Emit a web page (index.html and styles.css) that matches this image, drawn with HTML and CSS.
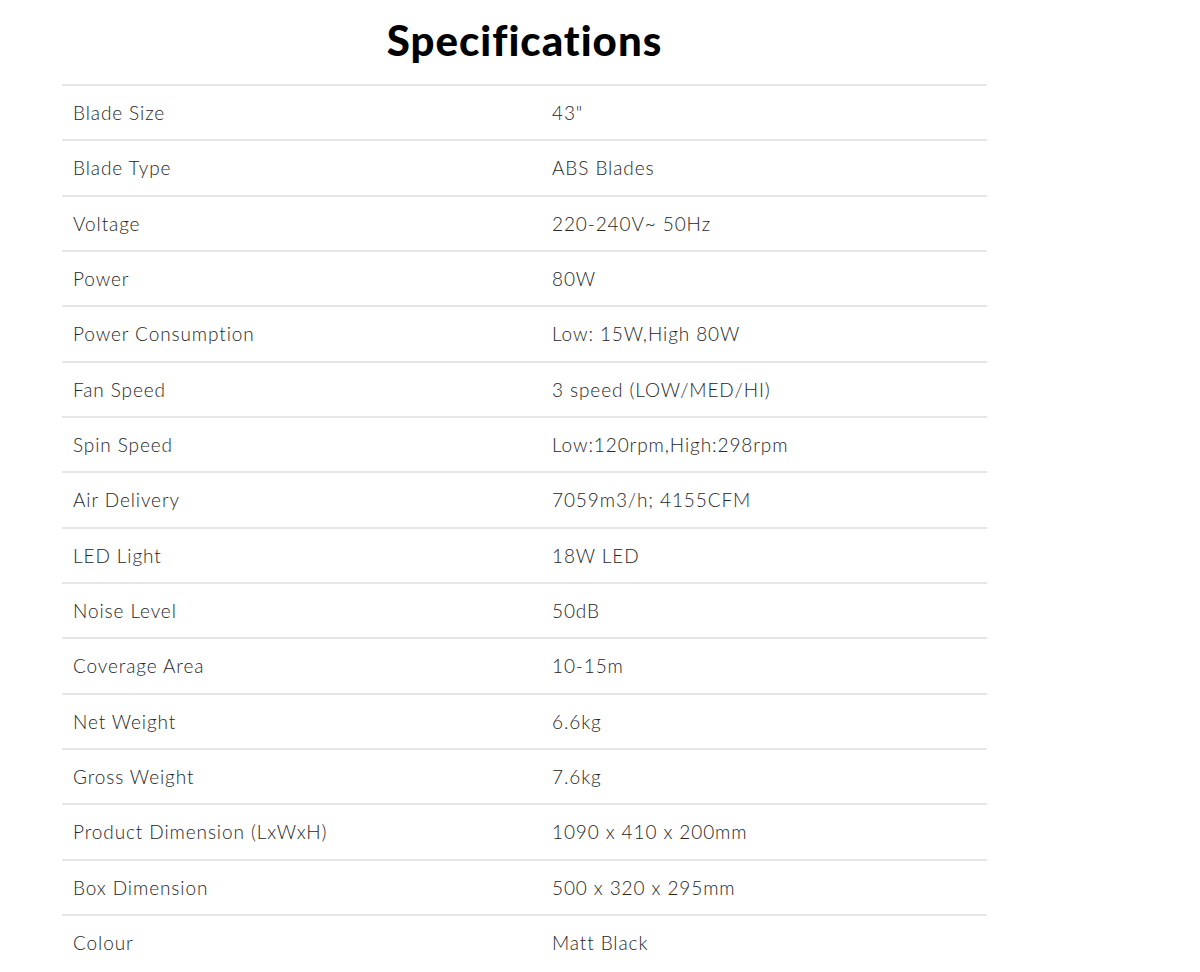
FILE: index.html
```html
<!DOCTYPE html>
<html>
<head>
<meta charset="utf-8">
<link rel="stylesheet" href="styles.css">
</head>
<body>
<section class="specs">
  <h2 class="specs-title">Specifications</h2>
  <table class="specs-table">
    <tr><td class="k">Blade Size</td><td class="v">43"</td></tr>
    <tr><td class="k">Blade Type</td><td class="v">ABS Blades</td></tr>
    <tr><td class="k">Voltage</td><td class="v">220-240V~ 50Hz</td></tr>
    <tr><td class="k">Power</td><td class="v">80W</td></tr>
    <tr><td class="k">Power Consumption</td><td class="v">Low: 15W,High 80W</td></tr>
    <tr><td class="k">Fan Speed</td><td class="v">3 speed (LOW/MED/HI)</td></tr>
    <tr><td class="k">Spin Speed</td><td class="v">Low:120rpm,High:298rpm</td></tr>
    <tr><td class="k">Air Delivery</td><td class="v">7059m3/h; 4155CFM</td></tr>
    <tr><td class="k">LED Light</td><td class="v">18W LED</td></tr>
    <tr><td class="k">Noise Level</td><td class="v">50dB</td></tr>
    <tr><td class="k">Coverage Area</td><td class="v">10-15m</td></tr>
    <tr><td class="k">Net Weight</td><td class="v">6.6kg</td></tr>
    <tr><td class="k">Gross Weight</td><td class="v">7.6kg</td></tr>
    <tr><td class="k">Product Dimension (LxWxH)</td><td class="v">1090 x 410 x 200mm</td></tr>
    <tr><td class="k">Box Dimension</td><td class="v">500 x 320 x 295mm</td></tr>
    <tr><td class="k">Colour</td><td class="v">Matt Black</td></tr>
  </table>
</section>
</body>
</html>
```
FILE: styles.css
```css
html, body {
  margin: 0;
  padding: 0;
  background: #fff;
}
body {
  font-family: "Lato", "DejaVu Sans", sans-serif;
  color: #333;
}
.specs {
  width: 925px;
  margin-left: 62px;
}
.specs-title {
  margin: 0;
  padding-top: 14px;
  height: 84px;
  box-sizing: border-box;
  text-align: center;
  font-family: "Lato", sans-serif;
  font-weight: 900;
  font-size: 42px;
  line-height: 52px;
  color: #000;
  letter-spacing: 1px;
}
.specs-table {
  width: 100%;
  border-collapse: collapse;
  border-top: 2px solid #e6e6e6;
}
.specs-table td {
  height: 53.33px;
  padding: 0 11px;
  border-bottom: 2px solid #e6e6e6;
  font-size: 19px;
  font-weight: 300;
  letter-spacing: 0.9px;
  color: #262626;
  vertical-align: middle;
}
.specs-table td.k {
  width: 457px;
}
.specs-table tr:last-child td {
  border-bottom: none;
}
```
